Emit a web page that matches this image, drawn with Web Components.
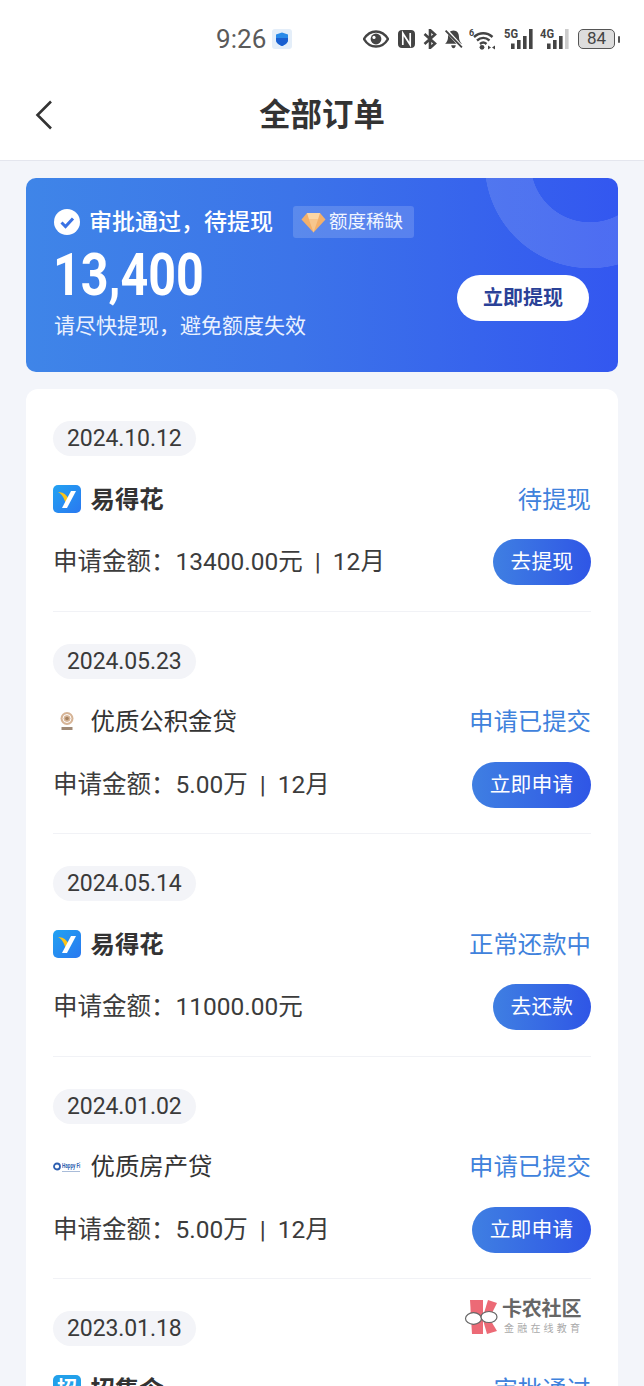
<!DOCTYPE html>
<html lang="zh">
<head>
<meta charset="utf-8">
<title>全部订单</title>
<style>
  html, body { margin: 0; padding: 0; height: 1386px; overflow: hidden; }
  body {
    background: #f3f5fa;
    font-family: "Noto Sans CJK SC", "Noto Sans", sans-serif;
    color: #333;
  }
</style>
</head>
<body>
<status-bar></status-bar>
<nav-header>全部订单</nav-header>
<hero-card amount="13,400"></hero-card>
<order-list>
  <order-item date="2024.10.12" logo="yi" name="易得花" strong status="待提现" amount="申请金额：13400.00元 | 12月" action="去提现"></order-item>
  <order-item date="2024.05.23" logo="fund" name="优质公积金贷" status="申请已提交" amount="申请金额：5.00万 | 12月" action="立即申请"></order-item>
  <order-item date="2024.05.14" logo="yi" name="易得花" strong status="正常还款中" amount="申请金额：11000.00元" action="去还款"></order-item>
  <order-item date="2024.01.02" logo="happy" name="优质房产贷" status="申请已提交" amount="申请金额：5.00万 | 12月" action="立即申请"></order-item>
  <order-item date="2023.01.18" logo="zhao" name="招集令" strong status="审批通过" amount="申请金额：5.00万" action="去查看"></order-item>
</order-list>
<water-mark></water-mark>

<script>
class StatusBar extends HTMLElement {
  constructor() {
    super();
    this.attachShadow({ mode: "open" });
    this.shadowRoot.innerHTML = `
    <style>
      :host { display: block; background: #fff; height: 78px; }
      .bar { display: flex; align-items: center; height: 78px; padding-left: 216px; box-sizing: border-box; }
      .time { font: 400 26px/1 Roboto, sans-serif; color: #5a5a5a; letter-spacing: 0.1px; width: 56px; }
      svg { display: block; flex: none; }
      .right { display: flex; align-items: center; margin-left: 71px; }
      .batt { width: 37px; height: 20px; box-sizing: border-box; border: 1.5px solid #555; border-radius: 5px; background: #ddd;
        font: 400 17px/17px Roboto, sans-serif; color: #444; text-align: center; margin-left: 8px; }
      .nub { width: 2px; height: 7px; background: #555; border-radius: 1px; margin-left: 3px; }
    </style>
    <div class="bar">
      <span class="time">9:26</span>
      <svg width="20" height="20" viewBox="0 0 20 20"><rect width="20" height="20" rx="3" fill="#e4eef9"/><path d="M10 3.500l6 2v5c0 3.400-2.600 5.200-6 6.400-3.400-1.200-6-3-6-6.400v-5z" fill="#2a8ae8"/><path d="M4 9h12v1.500c0 3.400-2.600 5.200-6 6.400-3.400-1.200-6-3-6-6.400z" fill="#1a5fd0"/></svg>
      <div class="right">
        <svg width="26" height="18" viewBox="0 0 26 18"><path d="M1 9c3-5 7-7.500 12-7.500S22 4 25 9c-3 5-7 7.500-12 7.500S4 14 1 9z" fill="none" stroke="#444" stroke-width="2.400"/><circle cx="13" cy="9" r="5.400" fill="#444"/><circle cx="11" cy="7.400" r="1.600" fill="#fff"/></svg>
        <svg style="margin-left:8px" width="19" height="20" viewBox="0 0 19 20"><path d="M5 1h9c2.500 0 4 1.500 4 4v10c0 2.500-1.500 4-4 4H5c-2.500 0-4-1.500-4-4V5c0-2.500 1.500-4 4-4z" fill="#444"/><path d="M5.800 16V4.200l7.400 11.600V4" fill="none" stroke="#fff" stroke-width="1.700"/></svg>
        <svg style="margin-left:7px" width="14" height="20" viewBox="0 0 14 20"><path d="M1.500 5l10.500 9.500L7 19V1l5 4.500L1.500 15" fill="none" stroke="#444" stroke-width="2.600"/></svg>
        <svg style="margin-left:7px" width="19" height="21" viewBox="0 0 18 20"><path d="M9 1.500c3.400 0 5.200 2.800 5.200 5.800 0 3 1 5 2.800 6.700H1c1.800-1.700 2.800-3.700 2.800-6.700 0-3 1.800-5.800 5.200-5.800z" fill="#444"/><path d="M6.800 15.500h4.400c-.3 1.800-1.100 2.800-2.200 2.800s-1.900-1-2.200-2.800z" fill="#444"/><path d="M2 1l15 16.500" stroke="#fff" stroke-width="3.200"/><path d="M1.500 1.500l15.500 16" stroke="#444" stroke-width="1.800"/></svg>
        <svg style="margin-left:6px" width="28" height="22" viewBox="0 0 28 22"><text x="0" y="8" font-family="Roboto" font-size="9" font-weight="700" fill="#444">6</text><path d="M5 9c5.500-5 13-5 18.500 0M8 12.500c3.800-3.300 8.700-3.300 12.500 0M11 16c2-1.700 4.500-1.700 6.500 0" fill="none" stroke="#444" stroke-width="2.400"/><circle cx="13" cy="19.300" r="2.400" fill="#444"/><path d="M19 17.500l3 2-3 2zM26 17.500l-3 2 3 2z" fill="#444"/></svg>
        <svg style="margin-left:7px" width="30" height="22" viewBox="0 0 30 22"><text x="0" y="10" font-family="Roboto" font-size="12" font-weight="700" fill="#444" textLength="14" lengthAdjust="spacingAndGlyphs">5G</text><rect x="7" y="15.500" width="3.600" height="5.500" fill="#444"/><rect x="13" y="12" width="3.600" height="9" fill="#444"/><rect x="19" y="8" width="3.600" height="13" fill="#444"/><rect x="25" y="1" width="3.600" height="20" fill="#444"/></svg>
        <svg style="margin-left:6px" width="30" height="22" viewBox="0 0 30 22"><text x="0" y="10" font-family="Roboto" font-size="12" font-weight="700" fill="#444" textLength="14" lengthAdjust="spacingAndGlyphs">4G</text><rect x="7" y="15.500" width="3.600" height="5.500" fill="#444"/><rect x="13" y="12" width="3.600" height="9" fill="#444"/><rect x="19" y="8" width="3.600" height="13" fill="#444"/><rect x="25" y="1" width="3.600" height="20" fill="#ccc"/></svg>
        <div class="batt">84</div>
        <div class="nub"></div>
      </div>
    </div>`;
  }
}

class NavHeader extends HTMLElement {
  constructor() {
    super();
    this.attachShadow({ mode: "open" });
    this.shadowRoot.innerHTML = `
    <style>
      :host { display: block; background: #fff; border-bottom: 1px solid #e4e6ee; }
      .nav { display: grid; grid-template-columns: 1fr auto 1fr; align-items: center; height: 82px; }
      .back { padding-left: 35px; display: flex; }
      h1 { margin: 0; font-size: 31.400px; line-height: 70px; font-weight: 700; color: #333; height: 74px; align-self: start; }
      svg { display: block; margin-top: -8px; }
    </style>
    <div class="nav">
      <div class="back"><svg width="18" height="30" viewBox="0 0 18 30"><path d="M16 1.500L2.500 15 16 28.500" fill="none" stroke="#333" stroke-width="2.600"/></svg></div>
      <h1><slot></slot></h1>
      <div></div>
    </div>`;
  }
}

class HeroCard extends HTMLElement {
  constructor() {
    super();
    this.attachShadow({ mode: "open" });
  }
  connectedCallback() {
    this.shadowRoot.innerHTML = `
    <style>
      :host { display: block; margin: 17px 26px 0; }
      .card {
        height: 194px; box-sizing: border-box; border-radius: 10px; color: #fff;
        padding: 28px 29px 51px 28px; display: flex; justify-content: space-between; align-items: flex-end;
        background:
          radial-gradient(circle at 564px -15px, transparent 59px, rgba(255,255,255,.13) 59.500px, rgba(255,255,255,.13) 105px, transparent 105.500px),
          linear-gradient(90deg, #3f85e8 0%, #3c74e9 45%, #3357f0 100%);
      }
      .left { align-self: flex-start; }
      .title { display: flex; align-items: center; height: 32px; font-size: 23px; font-weight: 500; }
      .title svg { margin-right: 9px; }
      .lift { padding-bottom: 4px; }
      .tag { display: flex; align-items: center; margin-left: 20px; height: 32px; padding: 0 11px 0 8px; background: rgba(255,255,255,.16);
        border-radius: 3px; font-size: 18.500px; font-weight: 400; color: #f1f5ff; }
      .tag svg { margin-right: 3px; }
      .num { font: 700 59px/56px Roboto, sans-serif; margin: 9px 0 0 -1px; height: 56px; letter-spacing: 0;
        transform: scaleX(0.82); transform-origin: left center; white-space: nowrap; }
      .sub { font-size: 21px; line-height: 30px; margin-top: 6px; height: 33px; color: #eaf1ff; }
      button { border: 0; width: 132px; height: 46px; border-radius: 23px; background: #fff; color: #2a4197;
        font: 700 20px "Noto Sans CJK SC", sans-serif; padding: 0 0 4px; }
    </style>
    <div class="card">
      <div class="left">
        <div class="title">
          <svg width="26" height="26" viewBox="0 0 26 26"><circle cx="13" cy="13" r="13" fill="#fff"/><path d="M7.500 13.500l4 4 7.500-8" fill="none" stroke="#3a72e4" stroke-width="3"/></svg>
          <span class="lift">审批通过，待提现</span>
          <span class="tag"><svg width="25" height="21" viewBox="0 0 25 21"><path d="M6 1h13l5.500 6.500L12.500 20.500.5 7.500z" fill="#f3b06b"/><path d="M6 1h13l-2 6.500H8z" fill="#fbd6a4"/><path d="M8 7.500h9l-4.500 13z" fill="#f7c68d"/></svg><span class="lift">额度稀缺</span></span>
        </div>
        <div class="num">${this.getAttribute("amount")}</div>
        <div class="sub">请尽快提现，避免额度失效</div>
      </div>
      <button>立即提现</button>
    </div>`;
  }
}

class OrderList extends HTMLElement {
  constructor() {
    super();
    this.attachShadow({ mode: "open" });
    this.shadowRoot.innerHTML = `
    <style>
      :host { display: block; margin: 17px 26px 0; background: #fff; border-radius: 12px 12px 0 0; padding: 32px 27px 0; }
    </style>
    <slot></slot>`;
  }
}

// logos are tiny in the screenshot, only rough shapes
const LOGOS = {
  yi: `<svg width="28" height="28" viewBox="0 0 28 28"><defs><linearGradient id="g" x1="0" y1="0" x2="1" y2="1"><stop offset="0" stop-color="#22a2f2"/><stop offset="1" stop-color="#2a78f0"/></linearGradient></defs><rect width="28" height="28" rx="5" fill="url(#g)"/><path d="M5 7c4 0 8 2 10 6l-2 6C11 13 9 9 5 7z" fill="#fcc419"/><path d="M23 6h-5l-9 17h5z" fill="#fff"/></svg>`,
  fund: `<svg width="28" height="28" viewBox="0 0 28 28"><circle cx="14" cy="10.500" r="6.500" fill="#d6b496"/><circle cx="14" cy="10.500" r="4" fill="none" stroke="#fff" stroke-width="1"/><circle cx="14" cy="10.500" r="1.800" fill="#a5825f"/><rect x="8.500" y="19" width="11" height="3" fill="#a08a76"/></svg>`,
  happy: `<span class="happy"><svg width="8" height="13" viewBox="0 0 8 13"><circle cx="4" cy="6.500" r="3" fill="none" stroke="#2d5fb0" stroke-width="1.800"/></svg><span class="hf">Happy Fi<i></i></span></span>`,
  zhao: `<span class="zhao">招</span>`
};

class OrderItem extends HTMLElement {
  constructor() {
    super();
    this.attachShadow({ mode: "open" });
  }
  connectedCallback() {
    const name = this.hasAttribute("strong") ? "name strong" : "name";
    const parts = this.getAttribute("amount").split(" | ");
    const amount = parts.length > 1 ? `${parts[0]}<span class="sep">|</span>${parts[1]}` : parts[0];
    this.shadowRoot.innerHTML = `
    <style>
      :host { display: block; }
      .wrap { border-bottom: 1px solid #f1f2f6; padding-bottom: 25.500px; margin-bottom: 32px; }
      .date { display: inline-block; vertical-align: top; height: 35px; padding: 0 14px; border-radius: 18px; background: #f3f4f8;
        font: 400 23px/35px Roboto, sans-serif; color: #3a3a3a; letter-spacing: -0.1px; }
      .row { display: flex; align-items: center; justify-content: space-between; }
      .top { height: 40px; margin-top: 23px; }
      .bottom { height: 46px; margin-top: 20px; }
      .who { display: flex; align-items: center; }
      .logo { width: 28px; height: 28px; margin-right: 9.500px; flex: none; }
      .logo svg { display: block; flex: none; }
      .name { font-size: 24.400px; color: #333; padding-bottom: 4px; }
      .strong { font-weight: 700; }
      .status { font-size: 24.400px; color: #3f82dc; padding-bottom: 4px; }
      .amount { font: 400 24.500px Roboto, "Noto Sans CJK SC", sans-serif; color: #3c3c3c; padding: 0 0 5px 0; }
      .sep { margin: 0 12px; }
      button { border: 0; height: 46px; padding: 0 18px 4px; border-radius: 23px; color: #fff; font: 400 20.800px "Noto Sans CJK SC", sans-serif;
        background: linear-gradient(90deg, #3f7fe2, #2f56e6); }
      .happy { display: flex; align-items: center; height: 28px; }
      .hf { display: block; flex: none; font: 700 7.500px/8px Roboto, sans-serif; color: #2d5fb0; white-space: nowrap;
        transform: scaleX(0.62); transform-origin: left center; margin-left: 1px; }
      .hf i { display: block; height: 1px; background: #a9bcd9; margin-top: 1px; }
      .zhao { display: block; width: 28px; height: 28px; border-radius: 5px; background: #22a0ea; color: #fff; font-size: 20px; line-height: 26px; font-weight: 700; text-align: center; }
    </style>
    <div class="wrap">
      <div class="date">${this.getAttribute("date")}</div>
      <div class="row top">
        <div class="who"><div class="logo">${LOGOS[this.getAttribute("logo")]}</div><span class="${name}">${this.getAttribute("name")}</span></div>
        <span class="status">${this.getAttribute("status")}</span>
      </div>
      <div class="row bottom">
        <span class="amount">${amount}</span>
        <button>${this.getAttribute("action")}</button>
      </div>
    </div>`;
  }
}

class WaterMark extends HTMLElement {
  constructor() {
    super();
    this.attachShadow({ mode: "open" });
    this.shadowRoot.innerHTML = `
    <style>
      :host { position: absolute; left: 464px; top: 1298px; display: flex; align-items: center; gap: 4px;
        font-family: "Liberation Sans", "Noto Sans CJK SC", sans-serif; }
      .t { color: #666; font-size: 20px; line-height: 22px; font-weight: 700; letter-spacing: -0.2px; white-space: nowrap; }
      .s { color: #aaa; font-size: 10px; line-height: 12px; letter-spacing: 3.200px; white-space: nowrap; margin-left: 2px; margin-top: 3px; }
    </style>
    <svg width="34" height="36" viewBox="0 0 34 36">
      <path d="M6 1h13v34H8z" fill="#ec6a76"/>
      <path d="M20 14l4-13 9 3-6 12z" fill="#ec6a76"/>
      <path d="M19 21l8 1 6 10-10 3z" fill="#ec6a76"/>
      <ellipse cx="9.500" cy="19.500" rx="8" ry="5.800" fill="#fff" stroke="#666" stroke-width="1.200"/>
      <ellipse cx="25" cy="18" rx="8" ry="5.500" fill="#fff" stroke="#666" stroke-width="1.200"/>
    </svg>
    <div><div class="t">卡农社区</div><div class="s">金融在线教育</div></div>`;
  }
}

customElements.define("status-bar", StatusBar);
customElements.define("nav-header", NavHeader);
customElements.define("hero-card", HeroCard);
customElements.define("order-list", OrderList);
customElements.define("order-item", OrderItem);
customElements.define("water-mark", WaterMark);
</script>
</body>
</html>
